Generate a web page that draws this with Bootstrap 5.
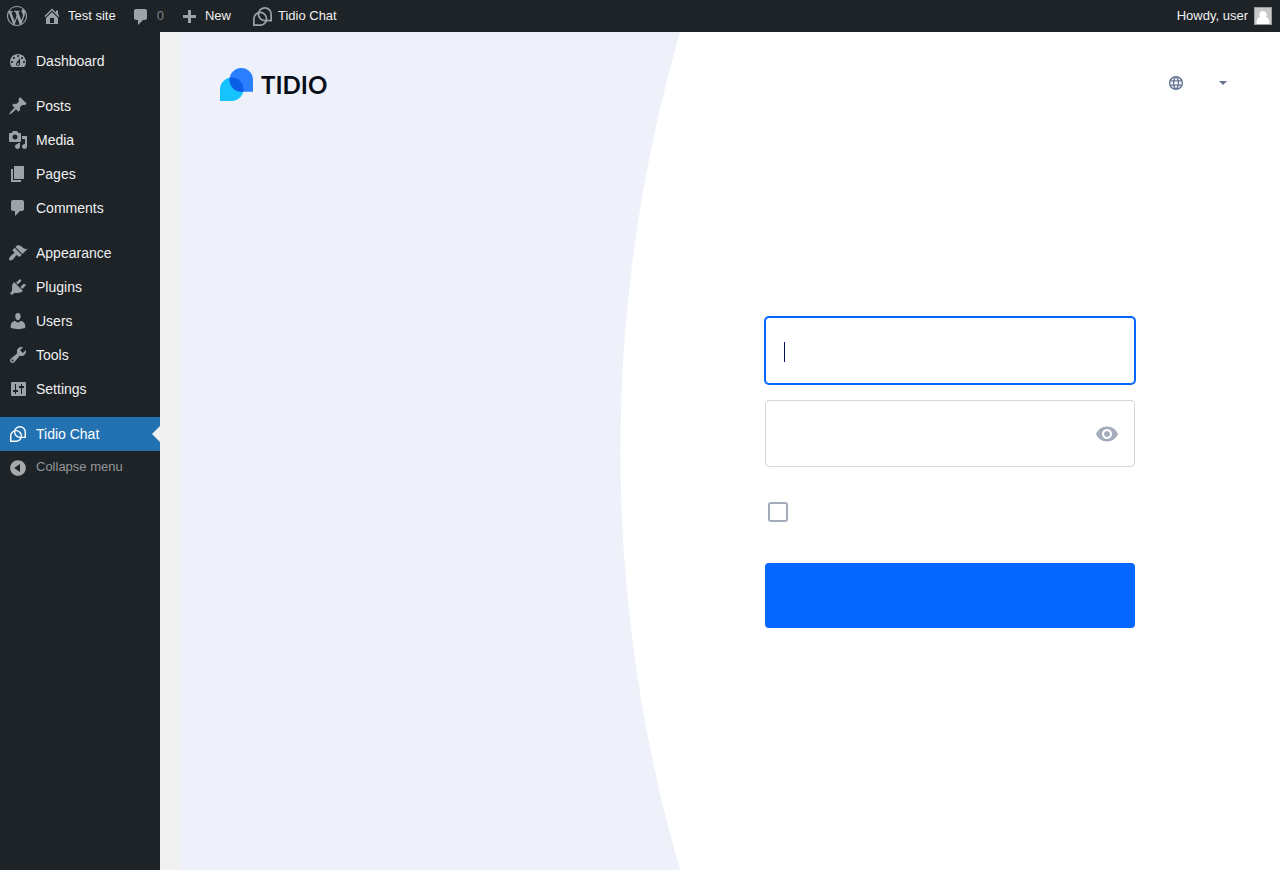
<!DOCTYPE html>
<html lang="en">
<head>
<meta charset="utf-8">
<meta name="viewport" content="width=device-width, initial-scale=1">
<title>Tidio Chat</title>
<link rel="stylesheet" href="https://cdn.jsdelivr.net/npm/bootstrap@5.3.0/dist/css/bootstrap.min.css">
<style>
body { font-family: "Liberation Sans", Arial, sans-serif; font-size: 14px; background: #f0f0f1; }
svg { display: block; flex: none; }
.ic { width: 20px; height: 20px; fill: #9ca2a7; }
a { color: #f0f0f1; text-decoration: none; }
.adminbar { height: 32px; background: #1d2327; font-size: 13px; line-height: 32px; padding: 0 8px 0 7px; }
.adminbar a { display: flex; align-items: center; gap: 6px; }
.adminbar .site { padding-left: 15px; }
.adminbar .bubble { padding: 0 15px; }
.adminbar .bubble span { color: #9ca2a7; opacity: .75; }
.adminbar .tidio-link { padding-left: 22px; }
.adminbar .tidio { width: 19px; height: 19px; }
.tidio { fill: none; stroke: #9ca2a7; stroke-width: 3; }
.avatar { width: 18px; height: 18px; }
.sidebar { width: 160px; background: #1d2327; padding-top: 12px; }
.sidebar a, .sidebar button { display: flex; align-items: center; gap: 8px; height: 34px; padding: 0 8px; width: 100%; position: relative; }
.sidebar .group { margin-bottom: 11px; }
.sidebar .current { background: #2271b1; color: #fff; }
.sidebar .current::after { content: ""; position: absolute; right: 0; top: 9px; border: 8px solid transparent; border-left: 0; border-right-color: #f0f0f1; }
.sidebar .current .tidio { width: 16px; height: 16px; stroke: #fff; margin: 0 2px; }
.collapse-btn { border: 0; background: none; color: #a7aaad; font-size: 13px; }
.collapse-btn .ic { fill: #a7aaad; }
.collapse-btn span { opacity: .85; padding-bottom: 3px; }
.content-area { padding-left: 20px; }
.panel { background: radial-gradient(circle 1501px at calc(40% + 1501px) 50%, #fff 1500px, #eef1f9 1501px); }
.panel-head { padding: 36px 53px 34px 40px; }
.wordmark { font-family: Lato, sans-serif; font-weight: 700; font-size: 24px; line-height: 33px; color: #080f1a; }
.lang { border: 0; background: none; padding: 0; gap: 36px; height: 30px; }
.form-side { width: 60%; padding-bottom: 60px; }
.login { width: 370px; max-width: 100%; }
.login .form-control { height: 67px; border: 1px solid #d3d6da; border-radius: 4px; padding: 0 60px 0 19px; font-size: 17px; color: #06115a; background-color: #fff; }
.login .form-control:focus, .login .active-field { border-color: #0566ff; box-shadow: 0 0 0 1px #0566ff; }
.login .active-field { background: linear-gradient(#06115a, #06115a) 18px 24px / 1px 20px no-repeat #fff; caret-color: transparent; }
.eye { position: absolute; right: 16px; top: 22px; border: 0; background: none; padding: 0; }
.login .form-check-input { width: 20px; height: 20px; border: 2px solid #a4acbb; border-radius: 3px; margin: 0; float: none; display: block; }
.remember { padding: 35px 3px 41px; }
.submit { height: 65px; background: #0566ff; border: 0; border-radius: 4px; }
</style>
</head>
<body class="d-flex flex-column min-vh-100">
<svg width="0" height="0" class="position-absolute" aria-hidden="true">
  <symbol id="comment" viewBox="0 0 20 20"><path d="M5 2h9c1.100 0 2 .9 2 2v7c0 1.100-.9 2-2 2h-2l-5 5v-5H5c-1.100 0-2-.9-2-2V4c0-1.100.9-2 2-2z"/></symbol>
  <symbol id="tidio" viewBox="0 0 33 33"><path d="M9.500 12.500a11 11 0 0 1 22 0v11h-11a11 11 0 0 1-11-11zM23.500 20.500a11 11 0 0 0-22 0v11h11a11 11 0 0 0 11-11z"/></symbol>
</svg>

<header class="adminbar d-flex">
  <a href="#" aria-label="About WordPress"><svg class="ic" viewBox="0 0 20 20"><path d="M20 10c0-5.510-4.490-10-10-10C4.480 0 0 4.490 0 10c0 5.520 4.480 10 10 10 5.510 0 10-4.480 10-10zM7.780 15.370L4.370 6.220c.55-.02 1.170-.08 1.170-.08.5-.06.44-1.130-.06-1.110 0 0-1.450.11-2.370.11-.18 0-.37 0-.58-.01C4.120 2.690 6.870 1.110 10 1.110c2.330 0 4.450.87 6.050 2.340-.68-.11-1.650.39-1.650 1.580 0 .74.45 1.360.9 2.100.35.61.55 1.360.55 2.460 0 1.490-1.400 5-1.400 5l-3.030-8.370c.54-.02.82-.17.82-.17.5-.05.44-1.250-.06-1.220 0 0-1.440.12-2.380.12-.87 0-2.330-.12-2.330-.12-.5-.03-.56 1.200-.06 1.220l.92.08 1.260 3.410zM17.410 10c.24-.64.74-1.870.43-4.250.7 1.290 1.050 2.710 1.050 4.250 0 3.290-1.730 6.240-4.400 7.780.97-2.590 1.940-5.200 2.920-7.780zM6.100 18.090C3.120 16.650 1.110 13.530 1.110 10c0-1.300.23-2.480.72-3.590C3.250 10.300 4.670 14.200 6.100 18.090zm4.030-6.630l2.580 6.980c-.86.29-1.760.45-2.710.45-.79 0-1.570-.11-2.290-.33.81-2.380 1.620-4.740 2.420-7.100z"/></svg></a>
  <a href="#" class="site"><svg class="ic" viewBox="0 0 20 20"><path fill-rule="evenodd" d="M16 8.500l1.530 1.530-1.060 1.060L10 4.600l-6.470 6.490-1.060-1.060L10 2.500l4 4v-2h2v4zm-6-2.460l6 5.990V18H4v-5.970zM12 17v-5H8v5h4z"/></svg>Test site</a>
  <a href="#" class="bubble"><svg class="ic" viewBox="0 0 20 20"><path d="M5 3h9c1.100 0 2 .9 2 2v7c0 1.100-.9 2-2 2h-2l-5 5v-5H5c-1.100 0-2-.9-2-2V5c0-1.100.9-2 2-2z"/></svg><span>0</span></a>
  <a href="#"><svg class="ic" viewBox="0 0 20 20"><path d="M9 4h3v5h5v3h-5v5H9v-5H4V9h5z"/></svg>New</a>
  <a href="#" class="ms-auto order-last">Howdy, user<svg class="avatar" viewBox="0 0 18 18"><path fill="#c8c8c8" stroke="#9b9fa2" d="M.5.5h17v17H.5z"/><path fill="#fff" d="M9 4a3.800 3.800 0 0 1 3 6c2.500.8 3.500 3 3.500 7h-13c0-4 1-6.200 3.500-7A3.800 3.800 0 0 1 9 4z"/></svg></a>
  <a href="#" class="tidio-link"><svg class="tidio"><use href="#tidio"/></svg>Tidio Chat</a>
</header>

<div class="d-flex flex-grow-1">
  <nav class="sidebar flex-shrink-0" aria-label="Main menu">
    <div class="group">
      <a href="#"><svg class="ic" viewBox="0 0 20 20"><path fill-rule="evenodd" d="M3.760 16h12.480c1.100-1.370 1.760-3.110 1.760-5 0-4.420-3.580-8-8-8s-8 3.580-8 8c0 1.890.66 3.630 1.760 5zM10 4c.55 0 1 .45 1 1s-.45 1-1 1-1-.45-1-1 .45-1 1-1zM6 6c.55 0 1 .45 1 1s-.45 1-1 1-1-.45-1-1 .45-1 1-1zm8 0c.55 0 1 .45 1 1s-.45 1-1 1-1-.45-1-1 .45-1 1-1zm-5.370 5.550L12 7v6c0 1.100-.9 2-2 2s-2-.9-2-2c0-.57.24-1.080.63-1.450zM4 10c.55 0 1 .45 1 1s-.45 1-1 1-1-.45-1-1 .45-1 1-1zm12 0c.55 0 1 .45 1 1s-.45 1-1 1-1-.45-1-1 .45-1 1-1zm-5 3c0-.55-.45-1-1-1s-1 .45-1 1 .45 1 1 1 1-.45 1-1z"/></svg>Dashboard</a>
    </div>
    <div class="group">
      <a href="#"><svg class="ic" viewBox="0 0 20 20"><path d="M10.440 3.020l1.820-1.820 6.360 6.350-1.830 1.820c-1.050-.68-2.480-.57-3.410.36l-.75.75c-.92.93-1.040 2.350-.35 3.410l-1.830 1.820-2.410-2.410-2.800 2.790c-.42.42-3.380 2.710-3.800 2.290s1.860-3.390 2.280-3.810l2.790-2.790L4.100 9.360l1.830-1.820c1.050.69 2.480.57 3.400-.36l.75-.75c.93-.92 1.050-2.350.36-3.410z"/></svg>Posts</a>
      <a href="#"><svg class="ic" viewBox="0 0 20 20"><path fill-rule="evenodd" d="M13 11V4c0-.55-.45-1-1-1h-1.670L9 1H5L3.670 3H2c-.55 0-1 .45-1 1v7c0 .55.45 1 1 1h10c.55 0 1-.45 1-1zM7 4.500c1.380 0 2.500 1.120 2.500 2.500S8.380 9.500 7 9.500 4.500 8.380 4.500 7 5.620 4.500 7 4.500zM14 6h5v10.500c0 1.380-1.120 2.500-2.500 2.500S14 17.880 14 16.500s1.120-2.500 2.500-2.500c.17 0 .34.02.5.05V9h-3V6zm-4 8.050V13h2v3.500c0 1.380-1.120 2.500-2.500 2.500S7 17.880 7 16.500 8.120 14 9.500 14c.17 0 .34.02.5.05z"/></svg>Media</a>
      <a href="#"><svg class="ic" viewBox="0 0 20 20"><path d="M6 15V2h10v13H6zm-1 1h8v2H3V5h2v11z"/></svg>Pages</a>
      <a href="#"><svg class="ic"><use href="#comment"/></svg>Comments</a>
    </div>
    <div class="group">
      <a href="#"><svg class="ic" viewBox="0 0 20 20"><path d="M14.480 11.060L7.410 3.990l1.500-1.500c.5-.56 2.300-.47 3.510.32 1.210.8 1.430 1.280 2.910 2.100 1.180.64 2.450 1.260 4.450.85zm-.71.71L6.700 4.700 4.930 6.470c-.39.39-.39 1.020 0 1.410l1.060 1.060c.39.39.39 1.030 0 1.420-.6.6-1.430 1.110-2.210 1.690-.35.26-.7.53-1.010.84C1.430 14.230.4 16.080 1.400 17.070c.99 1 2.840-.03 4.180-1.360.31-.31.58-.66.85-1.020.57-.78 1.080-1.610 1.690-2.210.39-.39 1.020-.39 1.410 0l1.060 1.060c.39.39 1.020.39 1.410 0z"/></svg>Appearance</a>
      <a href="#"><svg class="ic" viewBox="0 0 20 20"><path d="M13.110 4.360L9.870 7.600 8 5.730l3.240-3.240c.35-.34 1.050-.2 1.560.32.52.51.66 1.210.31 1.550zm-8 1.770l.91-1.120 9.010 9.010-1.190.84c-.71.71-2.630 1.160-3.820 1.160H6.140L4.900 17.260c-.59.59-1.540.59-2.120 0-.59-.58-.59-1.530 0-2.120l1.240-1.240v-3.880c0-1.130.4-3.190 1.090-3.890zm7.260 3.970l3.240-3.240c.34-.35 1.040-.21 1.550.31.52.51.66 1.210.31 1.550l-3.240 3.250z"/></svg>Plugins</a>
      <a href="#"><svg class="ic" viewBox="0 0 20 20"><path d="M10 9.250c-2.270 0-2.730-3.440-2.730-3.440C7 4.020 7.820 2 9.970 2c2.160 0 2.980 2.020 2.710 3.810 0 0-.41 3.440-2.680 3.440zm0 2.570L12.720 10c2.390 0 4.520 2.330 4.520 4.530v2.490s-3.650 1.130-7.240 1.130c-3.650 0-7.240-1.130-7.240-1.130v-2.490c0-2.250 1.940-4.480 4.470-4.480z"/></svg>Users</a>
      <a href="#"><svg class="ic" viewBox="0 0 20 20"><path fill-rule="evenodd" d="M16.680 9.770c-1.340 1.340-3.300 1.670-4.950.99l-5.410 6.520c-.99.99-2.590.99-3.580 0s-.99-2.590 0-3.570l6.520-5.420c-.68-1.650-.35-3.610.99-4.950 1.280-1.280 3.120-1.620 4.720-1.060l-2.890 2.890 2.820 2.820 2.860-2.870c.53 1.580.18 3.390-1.080 4.650zM3.810 16.210c.4.39 1.040.39 1.430 0 .4-.4.4-1.040 0-1.430-.39-.4-1.030-.4-1.430 0-.39.39-.39 1.030 0 1.430z"/></svg>Tools</a>
      <a href="#"><svg class="ic" viewBox="0 0 20 20"><path fill-rule="evenodd" d="M4 3h13q1 0 1 1v12q0 1-1 1H4q-1 0-1-1V4q0-1 1-1zM7 5v6H5v2h2v2h1v-2h2v-2H8V5zM13 5v2h-2v2h2v6h1V9h2V7h-2V5z"/></svg>Settings</a>
    </div>
    <a href="#" class="current" aria-current="page"><svg class="tidio"><use href="#tidio"/></svg>Tidio Chat</a>
    <button type="button" class="collapse-btn"><svg class="ic" viewBox="0 0 20 20"><path fill-rule="evenodd" d="M10 2.160c4.330 0 7.840 3.510 7.840 7.840s-3.510 7.840-7.840 7.840S2.160 14.330 2.160 10 5.710 2.160 10 2.160zm2 11.720V6.120L6.180 9.970z"/></svg><span>Collapse menu</span></button>
  </nav>

  <main class="content-area flex-grow-1 d-flex">
    <div class="panel flex-grow-1 d-flex flex-column">
      <div class="panel-head d-flex justify-content-between align-items-start">
        <a href="#" class="d-flex gap-2">
          <svg width="33" height="33" viewBox="0 0 33 33" aria-hidden="true">
            <clipPath id="upper"><path d="M9.500 11.800a11.750 11.750 0 0 1 23.500 0v11.900H21.300A11.800 11.800 0 0 1 9.500 11.800z"/></clipPath>
            <path fill="#17c3ff" d="M23.500 21.200a11.750 11.750 0 0 0-23.500 0V33h11.700a11.800 11.800 0 0 0 11.800-11.800z"/>
            <path fill="#2b7fff" d="M9.500 11.800a11.750 11.750 0 0 1 23.500 0v11.900H21.300A11.800 11.800 0 0 1 9.500 11.800z"/>
            <path fill="#0b5ee8" clip-path="url(#upper)" d="M23.500 21.200a11.750 11.750 0 0 0-23.500 0V33h11.700a11.800 11.800 0 0 0 11.800-11.800z"/>
          </svg>
          <span class="wordmark">TIDIO</span>
        </a>
        <button type="button" class="lang d-flex align-items-center" aria-label="Language">
          <svg width="14" height="14" viewBox="2 2 20 20" fill="#647491"><path d="M11.990 2C6.470 2 2 6.480 2 12s4.470 10 9.990 10C17.520 22 22 17.520 22 12S17.520 2 11.990 2zm6.930 6h-2.950c-.32-1.250-.78-2.450-1.380-3.560 1.840.63 3.370 1.910 4.330 3.560zM12 4.040c.83 1.200 1.480 2.530 1.910 3.960h-3.820c.43-1.430 1.080-2.760 1.910-3.960zM4.260 14C4.100 13.360 4 12.690 4 12s.1-1.360.26-2h3.380c-.08.66-.14 1.320-.14 2s.06 1.340.14 2H4.260zm.82 2h2.950c.32 1.250.78 2.450 1.380 3.560-1.840-.63-3.370-1.900-4.330-3.560zm2.950-8H5.080c.96-1.660 2.490-2.930 4.330-3.560C8.810 5.550 8.350 6.750 8.030 8zM12 19.960c-.83-1.200-1.480-2.530-1.910-3.960h3.820c-.43 1.430-1.080 2.760-1.910 3.960zM14.340 14H9.660c-.09-.66-.16-1.320-.16-2s.07-1.350.16-2h4.680c.09.65.16 1.320.16 2s-.07 1.340-.16 2zm.25 5.560c.6-1.110 1.060-2.310 1.380-3.560h2.950c-.96 1.650-2.490 2.930-4.330 3.560zM16.360 14c.08-.66.14-1.320.14-2s-.06-1.340-.14-2h3.380c.16.64.26 1.310.26 2s-.1 1.360-.26 2h-3.380z"/></svg>
          <svg width="8" height="4" viewBox="0 0 8 4" fill="#647491"><path d="M0 0h8L4 4z"/></svg>
        </button>
      </div>
      <div class="form-side ms-auto flex-grow-1 d-flex justify-content-center align-items-center">
        <form class="login">
          <input type="email" class="form-control active-field mb-3" aria-label="Email">
          <div class="position-relative">
            <input type="password" class="form-control" aria-label="Password">
            <button type="button" class="eye" aria-label="Show password"><svg width="24" height="24" viewBox="0 0 24 24" fill="#a4acbb"><path d="M12 4.500C7 4.500 2.730 7.610 1 12c1.730 4.390 6 7.500 11 7.500s9.270-3.110 11-7.500c-1.730-4.390-6-7.500-11-7.500zM12 17c-2.760 0-5-2.240-5-5s2.240-5 5-5 5 2.240 5 5-2.240 5-5 5zm0-8c-1.660 0-3 1.340-3 3s1.340 3 3 3 3-1.340 3-3-1.340-3-3-3z"/></svg></button>
          </div>
          <div class="remember"><input type="checkbox" class="form-check-input" aria-label="Remember me"></div>
          <button type="submit" class="submit btn btn-primary w-100" aria-label="Log in"></button>
        </form>
      </div>
    </div>
  </main>
</div>
<script src="https://cdn.jsdelivr.net/npm/bootstrap@5.3.0/dist/js/bootstrap.bundle.min.js"></script>
</body>
</html>
